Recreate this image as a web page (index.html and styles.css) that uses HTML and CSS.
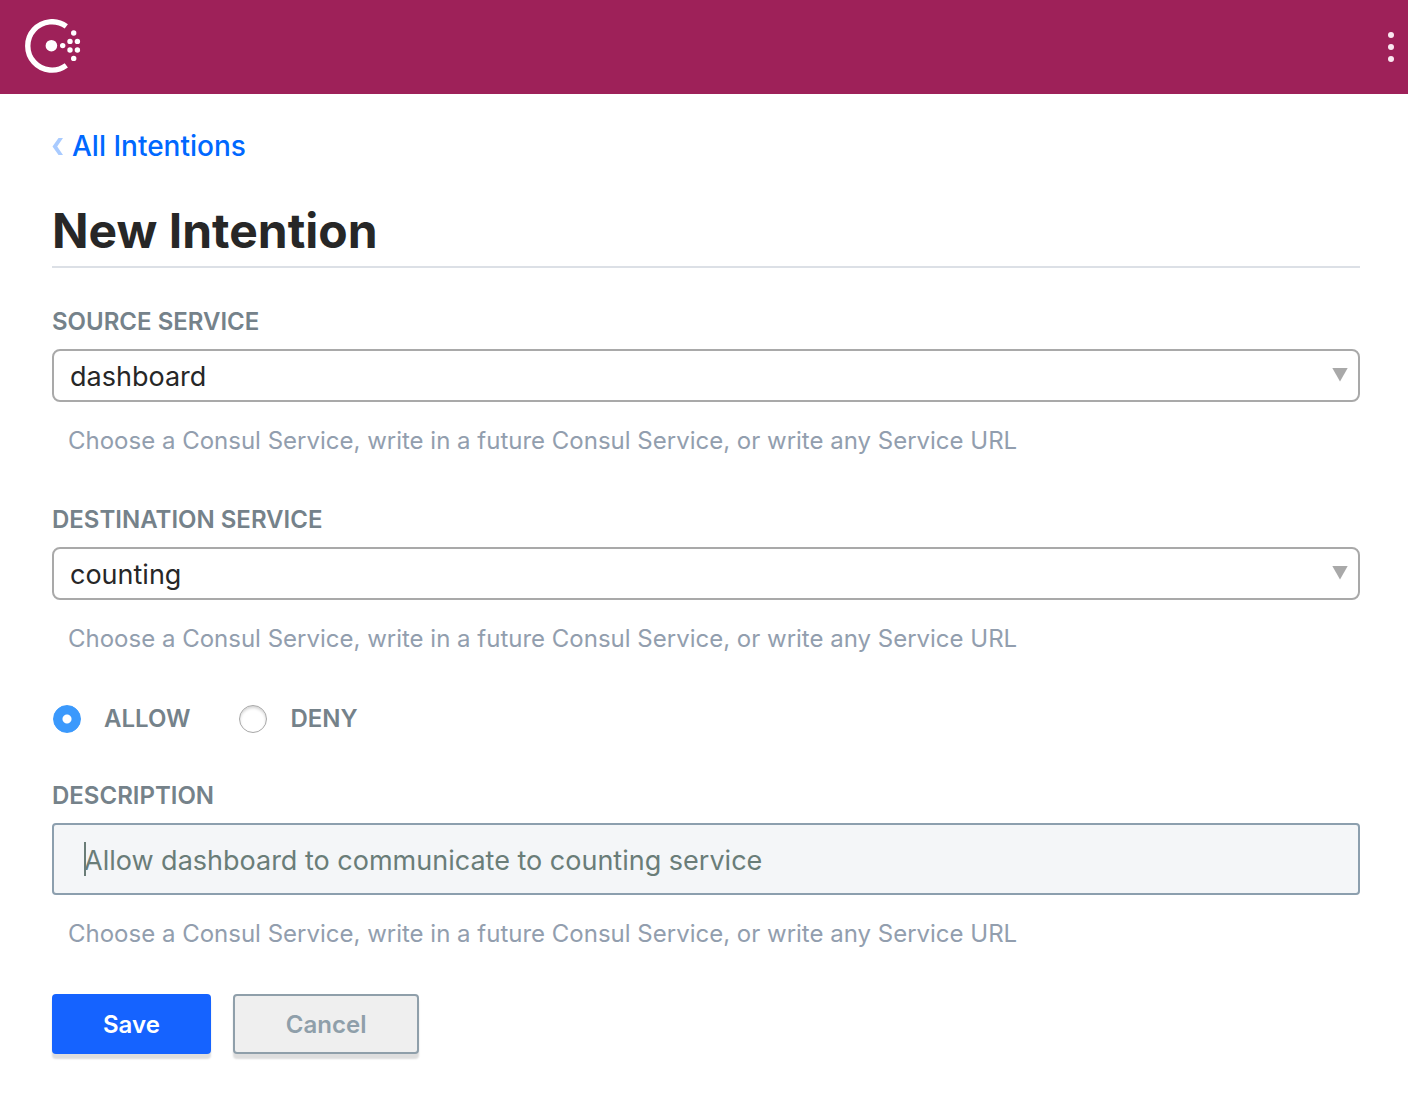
FILE: index.html
```html
<!DOCTYPE html>
<html lang="en">
<head>
<meta charset="utf-8">
<meta name="viewport" content="width=device-width, initial-scale=1">
<title>New Intention - Consul</title>
<link rel="stylesheet" href="styles.css">
</head>
<body>
<header class="topbar">
  <a class="logo" href="#" aria-label="Consul">
    <svg width="56" height="54" viewBox="0 0 56 54" fill="#fff" aria-hidden="true">
      <path d="M41.3 7.4A24.2 24.2 0 1 0 41.3 46.4" fill="none" stroke="#fff" stroke-width="5.4"/>
      <circle cx="26.4" cy="26.7" r="5.8"/>
      <circle cx="37.7" cy="26.6" r="2.7"/>
      <circle cx="45" cy="22.4" r="2.7"/>
      <circle cx="52.4" cy="22.4" r="2.7"/>
      <circle cx="45" cy="31" r="2.7"/>
      <circle cx="52.4" cy="31" r="2.7"/>
      <circle cx="48.7" cy="14" r="2.7"/>
      <circle cx="48.7" cy="39.4" r="2.7"/>
    </svg>
  </a>
  <button class="menu" type="button" aria-label="Menu">
    <svg width="6" height="30" viewBox="0 0 6 30" fill="#fbe8f1" aria-hidden="true">
      <circle cx="3" cy="3" r="3"/><circle cx="3" cy="15" r="3"/><circle cx="3" cy="27" r="3"/>
    </svg>
  </button>
</header>
<main class="page">
  <nav>
    <a class="back" href="#">
      <svg width="11" height="17" viewBox="0 0 11 17" fill="#a9cbff" aria-hidden="true"><path d="M6.5 0H11L5.2 8.5L11 17H6.5L0.5 8.5Z"/></svg>
      All Intentions
    </a>
  </nav>
  <h1 class="title">New Intention</h1>
  <form class="form">
    <div class="field">
      <label class="label" for="source">SOURCE SERVICE</label>
      <div class="picker">
        <select class="select" id="source"><option>dashboard</option></select>
      </div>
      <p class="hint">Choose a Consul Service, write in a future Consul Service, or write any Service URL</p>
    </div>
    <div class="field">
      <label class="label" for="destination">DESTINATION SERVICE</label>
      <div class="picker">
        <select class="select" id="destination"><option>counting</option></select>
      </div>
      <p class="hint">Choose a Consul Service, write in a future Consul Service, or write any Service URL</p>
    </div>
    <div class="choices">
      <label class="choice"><input class="radio" type="radio" name="action" checked>ALLOW</label>
      <label class="choice"><input class="radio" type="radio" name="action">DENY</label>
    </div>
    <div class="field field-last">
      <label class="label" for="description">DESCRIPTION</label>
      <div class="entry">
        <input class="text" id="description" type="text" placeholder="Allow dashboard to communicate to counting service">
      </div>
      <p class="hint">Choose a Consul Service, write in a future Consul Service, or write any Service URL</p>
    </div>
    <div class="actions">
      <button class="button save" type="submit">Save</button>
      <button class="button cancel" type="button">Cancel</button>
    </div>
  </form>
</main>
</body>
</html>
```
FILE: styles.css
```css
* { box-sizing: border-box; }
body {
  margin: 0;
  background: #fff;
  color: #272727;
  font-family: Inter, "Liberation Sans", sans-serif;
}
.topbar {
  display: flex;
  align-items: center;
  justify-content: space-between;
  height: 94px;
  padding: 0 14px 0 25px;
  background: #9e2159;
}
.logo { display: flex; padding-bottom: 2px; }
.menu {
  display: flex;
  padding: 0;
  border: 0;
  background: none;
}
.page { padding: 36px 48px 44px 52px; }
.back {
  display: inline-flex;
  align-items: center;
  gap: 9px;
  color: #0068ff;
  font-size: 28px;
  font-weight: 500;
  line-height: 32px;
  text-decoration: none;
  vertical-align: top;
}
.title {
  margin: 41px 0 0;
  padding-bottom: 7px;
  border-bottom: 2px solid #dce0e6;
  font-size: 48px;
  font-weight: 700;
  line-height: 56px;
}
.form { padding-top: 38px; }
.field { margin-bottom: 47px; }
.field-last { margin-bottom: 44px; }
.label {
  display: block;
  margin-bottom: 11px;
  color: #75828a;
  font-size: 24px;
  font-weight: 600;
  line-height: 32px;
}
.picker, .entry { display: grid; align-items: center; }
.picker::after {
  content: "";
  grid-area: 1 / 1;
  justify-self: end;
  width: 16px;
  height: 14px;
  margin: 0 12px 2px 0;
  background: #a9a9a9;
  clip-path: polygon(0 0, 100% 0, 50% 100%);
  pointer-events: none;
}
.select {
  grid-area: 1 / 1;
  appearance: none;
  width: 100%;
  height: 53px;
  padding: 2px 48px 0 16px;
  border: 2px solid #a9a9a9;
  border-radius: 8px;
  background: #fff;
  color: #272727;
  font: 400 27px/36px Inter, "Liberation Sans", sans-serif;
}
.hint {
  margin: 23px 0 0 16px;
  color: #929eae;
  font-size: 24px;
  line-height: 32px;
}
.choices { display: flex; gap: 48px; margin-bottom: 44px; }
.choice {
  display: flex;
  align-items: center;
  gap: 23px;
  color: #75828a;
  font-size: 24px;
  font-weight: 600;
  line-height: 34px;
}
.radio {
  appearance: none;
  width: 28px;
  height: 28px;
  margin: 0 0 0 1px;
  border: 1px solid #a8a8a8;
  border-radius: 50%;
  background: #fff;
  box-shadow: inset 0 2px 3px #d4d4d4;
}
.radio:checked {
  border-color: #3b99fc;
  background: radial-gradient(circle, #fff 0 4px, #3b99fc 5px);
  box-shadow: none;
}
.text {
  grid-area: 1 / 1;
  width: 100%;
  height: 72px;
  padding: 2px 30px 0;
  border: 2px solid #8c9fae;
  border-radius: 4px;
  background: #f4f6f8;
  color: #272727;
  font: 400 27px/36px Inter, "Liberation Sans", sans-serif;
  outline: 0;
}
.text::placeholder { color: #6a7d78; opacity: 1; }
.entry::after {
  content: "";
  grid-area: 1 / 1;
  width: 2px;
  height: 34px;
  margin-left: 32px;
  background: #6a7d78;
  pointer-events: none;
}
.actions { display: flex; gap: 22px; }
.button {
  height: 60px;
  padding: 2px 51px 0;
  border: 0;
  border-radius: 4px;
  box-shadow: 0 5px 2px #dedede;
  font: 600 24px/32px Inter, "Liberation Sans", sans-serif;
}
.save { background: #1563ff; color: #fff; }
.cancel { border: 2px solid #8f9faa; background: #efefef; color: #8f9faa; }
```
